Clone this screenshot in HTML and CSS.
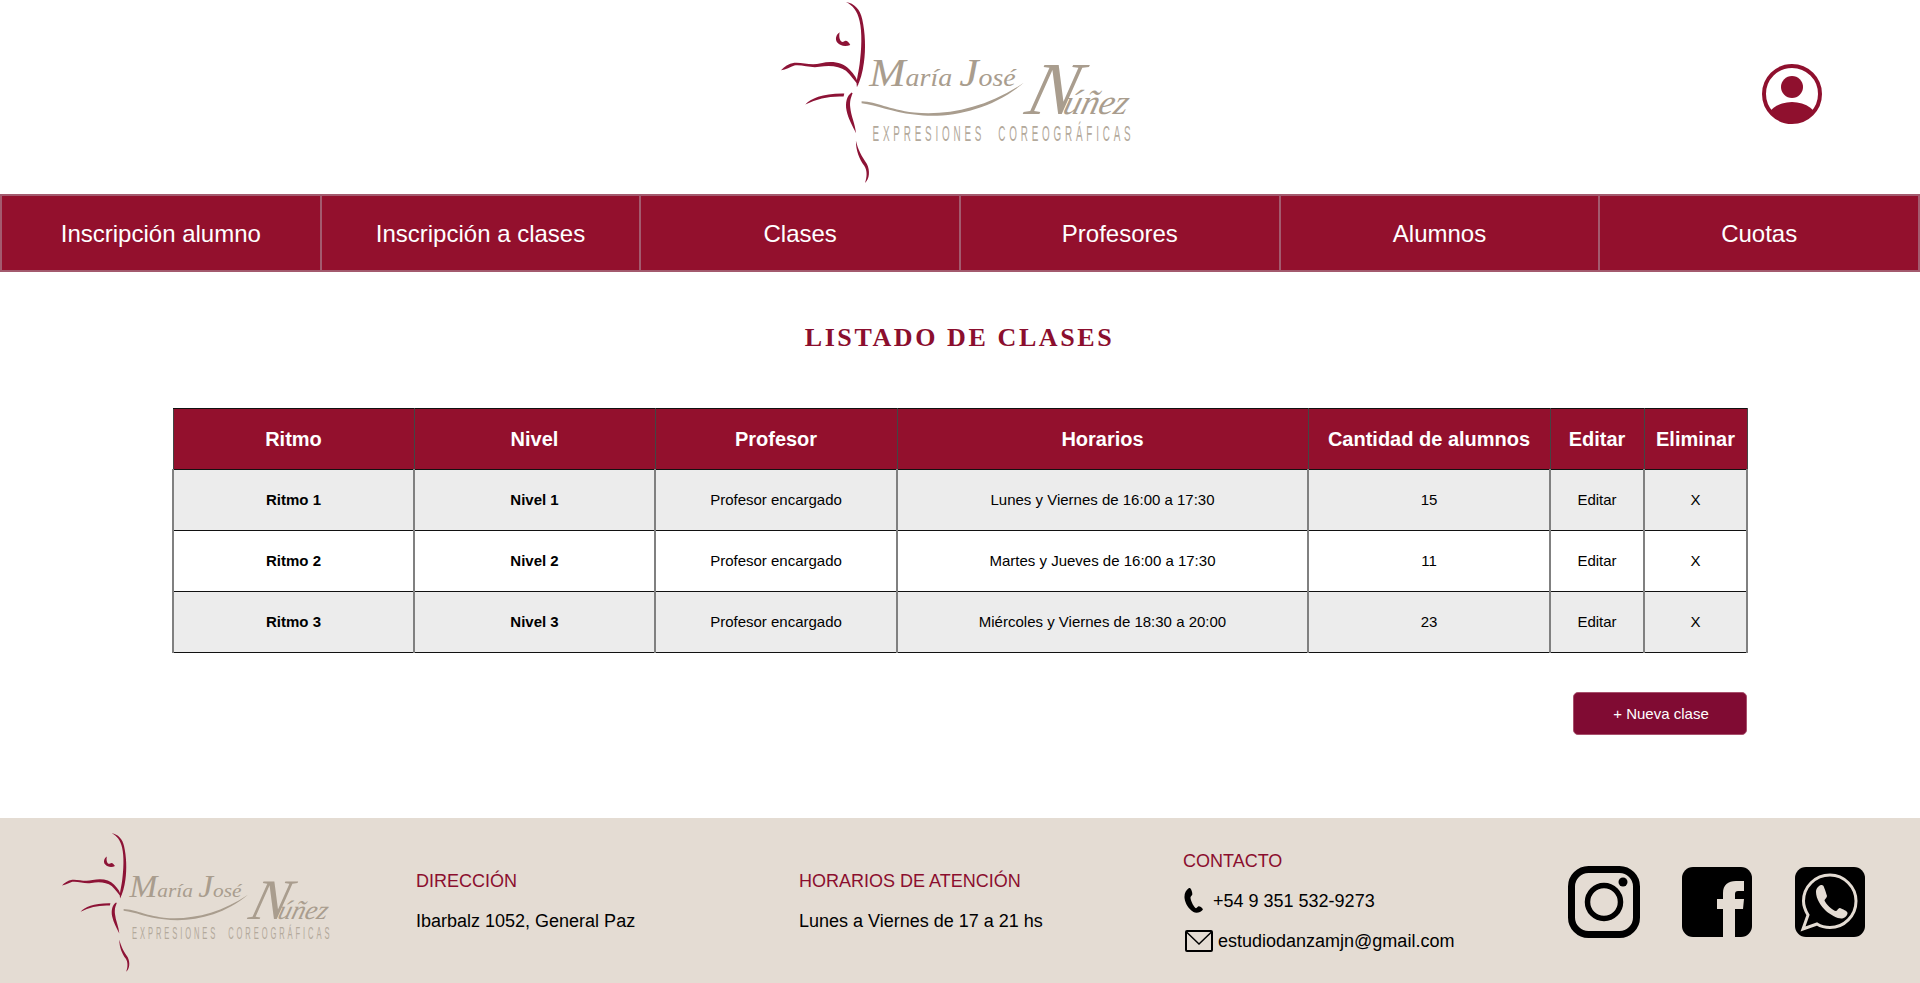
FILE: index.html
```html
<!DOCTYPE html>
<html lang="en">
<head>
    <meta charset="UTF-8">
    <meta name="viewport" content="width=device-width, initial-scale=1.0">
    <title>Listado de clases</title>
    <link rel="stylesheet" href="styles.css">
</head>
<body>
<svg class="defs" width="0" height="0">
    <symbol id="logo-art" viewBox="60 0 1060 560">
        <g class="logo-red">
            <path d="M255 8C280 12 298 30 304 60C313 100 315 150 309 190C305 220 298 245 288 264C285 245 292 225 296 195C302 150 304 100 296 65C290 35 275 18 255 8Z"/>
            <path d="M60 213C70 203 82 194 100 191C125 189 150 200 180 192C215 184 245 190 265 210C280 225 290 240 292 258C280 245 270 228 255 215C235 200 205 197 175 203C150 208 125 196 100 199C88 203 75 212 60 213Z"/>
            <path d="M236 99C226 105 221 120 229 130C238 141 255 143 268 137C263 127 255 121 249 127C241 132 232 120 236 99Z"/>
            <path d="M133 316C150 298 185 282 250 283L248 292C205 290 170 298 133 316Z"/>
            <path d="M272 280C258 290 252 310 257 335C262 360 275 380 285 402C283 375 270 350 268 325C266 305 270 295 275 282Z"/>
            <path d="M285 425C285 455 295 480 310 500C320 515 318 535 312 552C326 540 328 515 318 495C302 470 292 455 285 425Z"/>
        </g>
        <path class="logo-tan" d="M302 306C350 308 380 330 460 340C560 350 680 325 790 250C690 335 560 360 460 346C390 338 350 318 302 312Z"/>
    </symbol>
</svg>

<header class="top">
    <svg class="top-logo" viewBox="60 0 1060 560">
        <use href="#logo-art" x="60" y="0" width="1060" height="560"/>
        <text class="logo-name" x="325" y="260" textLength="440" lengthAdjust="spacingAndGlyphs"><tspan class="logo-initial">M</tspan>aría <tspan class="logo-initial">J</tspan>osé</text>
        <text class="logo-surname" transform="skewX(-15)" x="880" y="346"><tspan class="logo-cap">N</tspan><tspan dx="-34">úñez</tspan></text>
        <text class="logo-tag" transform="translate(335 425) scale(.45 1)" textLength="1722">EXPRESIONES  COREOGRÁFICAS</text>
    </svg>
    <a class="user" href="#" aria-label="Usuario">
        <svg viewBox="0 0 60 60" width="60" height="60">
            <defs><clipPath id="user-clip"><circle cx="30" cy="30" r="28"/></clipPath></defs>
            <circle class="user-ring" cx="30" cy="30" r="28"/>
            <circle class="user-fill" cx="30" cy="23" r="11"/>
            <ellipse class="user-fill" cx="30" cy="58" rx="26" ry="20" clip-path="url(#user-clip)"/>
        </svg>
    </a>
</header>

<nav class="menu">
    <a href="#">Inscripción alumno</a>
    <a href="#">Inscripción a clases</a>
    <a href="#">Clases</a>
    <a href="#">Profesores</a>
    <a href="#">Alumnos</a>
    <a href="#">Cuotas</a>
</nav>

<main class="content">
    <h1>LISTADO DE CLASES</h1>
    <table class="classes">
        <colgroup>
            <col class="col-base">
            <col class="col-base">
            <col class="col-wide">
            <col class="col-hours">
            <col class="col-wide">
            <col class="col-edit">
            <col class="col-delete">
        </colgroup>
        <thead>
        <tr>
            <th>Ritmo</th>
            <th>Nivel</th>
            <th>Profesor</th>
            <th>Horarios</th>
            <th>Cantidad de alumnos</th>
            <th>Editar</th>
            <th>Eliminar</th>
        </tr>
        </thead>
        <tbody>
        <tr>
            <td class="strong">Ritmo 1</td>
            <td class="strong">Nivel 1</td>
            <td>Profesor encargado</td>
            <td>Lunes y Viernes de 16:00 a 17:30</td>
            <td>15</td>
            <td>Editar</td>
            <td>X</td>
        </tr>
        <tr>
            <td class="strong">Ritmo 2</td>
            <td class="strong">Nivel 2</td>
            <td>Profesor encargado</td>
            <td>Martes y Jueves de 16:00 a 17:30</td>
            <td>11</td>
            <td>Editar</td>
            <td>X</td>
        </tr>
        <tr>
            <td class="strong">Ritmo 3</td>
            <td class="strong">Nivel 3</td>
            <td>Profesor encargado</td>
            <td>Miércoles y Viernes de 18:30 a 20:00</td>
            <td>23</td>
            <td>Editar</td>
            <td>X</td>
        </tr>
        </tbody>
    </table>
    <div class="actions">
        <button type="button" class="new-class">+ Nueva clase</button>
    </div>
</main>

<footer class="bottom">
    <svg class="bottom-logo" viewBox="60 0 1060 560">
        <use href="#logo-art" x="60" y="0" width="1060" height="560"/>
        <text class="logo-name" x="325" y="260" textLength="440" lengthAdjust="spacingAndGlyphs"><tspan class="logo-initial">M</tspan>aría <tspan class="logo-initial">J</tspan>osé</text>
        <text class="logo-surname" transform="skewX(-15)" x="880" y="346"><tspan class="logo-cap">N</tspan><tspan dx="-34">úñez</tspan></text>
        <text class="logo-tag" transform="translate(335 425) scale(.45 1)" textLength="1722">EXPRESIONES  COREOGRÁFICAS</text>
    </svg>
    <div class="info">
        <h2>DIRECCIÓN</h2>
        <p>Ibarbalz 1052, General Paz</p>
    </div>
    <div class="info info-hours">
        <h2>HORARIOS DE ATENCIÓN</h2>
        <p>Lunes a Viernes de 17 a 21 hs</p>
    </div>
    <div class="info contact">
        <h2>CONTACTO</h2>
        <p class="phone">
            <svg viewBox="0 0 19 25" width="19" height="25">
                <path d="M5 0C1.5 2.5 0 6 .6 10.500C1.300 15.500 4.500 21 9.500 24C11 25 14 25 16 24C18 23 19.300 21.800 18.800 21C18 19.500 15.500 18 14.500 18.300C13.500 18.800 13 20 12 20.200C10 19.500 7 13.500 6.500 10C6.300 8.500 8 7.800 8.300 6.500C8.500 5 7.500 1.500 6.500.5C6.100 0 5.500-.2 5 0Z"/>
            </svg>
            +54 9 351 532-9273
        </p>
        <p class="mail">
            <svg viewBox="0 0 28 22" width="28" height="22">
                <rect class="line" x="1" y="1" width="26" height="20" rx="1"/>
                <path class="line-thin" d="M1.500 2L14 14L26.500 2"/>
            </svg>
            estudiodanzamjn@gmail.com
        </p>
    </div>
    <div class="social">
        <svg viewBox="0 0 72 72" width="72" height="72">
            <rect class="ig" x="3.500" y="3.500" width="65" height="65" rx="17"/>
            <circle class="ig-lens" cx="36" cy="36" r="16.500"/>
            <circle cx="55" cy="16" r="4.500"/>
        </svg>
        <svg viewBox="0 0 70 70" width="70" height="70">
            <rect width="70" height="70" rx="11"/>
            <path class="cut" d="M41 70V42H35V32H41V26C41 18 46 14 54 14H62V24H56C54 24 53 25 53 27V32H62L61 42H53V70Z"/>
        </svg>
        <svg class="whatsapp" viewBox="0 0 70 70" width="70" height="70">
            <rect width="70" height="70" rx="11"/>
            <path class="wa-ring" d="M8 62L13 48C10 43 8.500 39 8.500 34C8.500 20 20 8 35 8C49 8 61 20 61 34C61 49 49 60.500 35 60.500C30 60.500 26 59.500 22 57Z"/>
            <path class="cut" d="M26 18C24 18.500 21 21 21 25C21 32 26 39 31 44C36 48 43 52 47 51.500C50 51 52.500 48.500 52.500 46C52.500 44 47.500 42 45 41C43.500 40.500 42.500 43.500 41 44C38 44 30.500 36.500 29.500 33.500C29.500 32 32 31 32 29C31.500 27 29.500 21 28.500 19C28 18 27 18 26 18Z"/>
        </svg>
    </div>
</footer>
</body>
</html>
```

FILE: styles.css
```css
html, body {
    height: 100%;
}

body {
    font-family: "Liberation Sans", Arial, sans-serif;
    margin: 0;
    padding: 0;
    display: flex;
    flex-direction: column;
    color: #000;
    background: #fff;
}

.defs {
    position: absolute;
}

/* logo */
.logo-red {
    fill: #8d1336;
}

.logo-tan {
    fill: #a99d8e;
}

.logo-name,
.logo-surname {
    fill: #a99d8e;
    font-family: "Liberation Serif", serif;
    font-style: italic;
}

.logo-name {
    font-size: 78px;
}

.logo-initial {
    font-size: 122px;
}

.logo-surname {
    font-size: 105px;
}

.logo-cap {
    font-size: 225px;
}

.logo-tag {
    font-family: "Liberation Sans", sans-serif;
    font-size: 66px;
    white-space: pre;
    fill: #b3a99b;
}

/* header */
.top {
    height: 194px;
    display: flex;
    align-items: flex-start;
    justify-content: center;
    position: relative;
}

.top-logo {
    width: 353px;
    height: 187px;
    margin-right: 5px;
    margin-top: -1px;
}

.user {
    position: absolute;
    left: 1762px;
    top: 64px;
    display: block;
    height: 60px;
}

.user-ring {
    fill: none;
    stroke: #8f102e;
    stroke-width: 4;
}

.user-fill {
    fill: #8f102e;
}

/* menu */
.menu {
    display: flex;
    height: 78px;
    box-sizing: border-box;
    padding: 2px 1px;
    background: #a35a6e;
}

.menu a {
    flex: 1;
    display: flex;
    align-items: center;
    justify-content: center;
    padding-top: 2px;
    background: #93102d;
    color: #fff;
    font-size: 24px;
    text-decoration: none;
    border-left: 1px solid #a35a6e;
    border-right: 1px solid #a35a6e;
}

/* listado */
.content {
    flex: 1;
    padding: 0 173px 0 172px;
}

h1 {
    font-family: "Liberation Serif", serif;
    font-size: 26px;
    line-height: 30px;
    letter-spacing: 2.6px;
    text-align: center;
    color: #8b0e2e;
    margin: 51px 0 55px;
}

.classes {
    width: 1574px;
    table-layout: fixed;
    border-collapse: collapse;
    text-align: center;
}

.col-base {
    width: 241px;
}

.col-wide {
    width: 242px;
}

.col-hours {
    width: 411px;
}

.col-edit {
    width: 94px;
}

.col-delete {
    width: 103px;
}

.classes th {
    height: 60px;
    padding: 0;
    background: #93102d;
    color: #fff;
    font-size: 20px;
    border: 1px solid #111;
    border-left-color: #444;
    border-right-color: #444;
}

.classes td {
    height: 58px;
    padding: 0 0 2px;
    font-size: 15px;
    border: 1px solid #111;
    border-left: 2px solid #808080;
    border-right: 2px solid #808080;
}

.classes tbody tr:nth-child(odd) td {
    background: #ececec;
}

.classes .strong {
    font-weight: bold;
}

.actions {
    display: flex;
    justify-content: flex-end;
    margin-top: 39px;
}

.new-class {
    width: 174px;
    height: 43px;
    padding: 0 0 0 2px;
    background: #800b33;
    color: #fff;
    border: 1px solid #a8506c;
    border-radius: 5px;
    font-family: inherit;
    font-size: 15px;
}

/* footer */
.bottom {
    height: 165px;
    display: flex;
    align-items: center;
    background: #e4dcd3;
    padding-left: 62px;
}

.bottom-logo {
    width: 270px;
    height: 143px;
    margin: 4px 84px 0 0;
}

.info {
    width: 383px;
    margin-top: 1px;
}

.info-hours {
    width: 384px;
}

.info h2 {
    font-size: 18px;
    font-weight: normal;
    line-height: 20px;
    color: #8b0e2e;
    margin: 0 0 20px;
}

.info p {
    font-size: 18px;
    line-height: 20px;
    margin: 0;
}

.contact {
    width: 385px;
    margin-top: 2px;
}

.info.contact h2 {
    margin-bottom: 17px;
}

.info .phone,
.info .mail {
    display: flex;
    align-items: center;
}

.info .phone {
    gap: 10px;
    margin-bottom: 17px;
}

.info .mail {
    gap: 5px;
}

.phone svg {
    flex: none;
    margin-left: 1px;
}

.mail svg {
    flex: none;
    margin-left: 2px;
}

.line {
    fill: none;
    stroke: #000;
    stroke-width: 2;
}

.line-thin {
    fill: none;
    stroke: #000;
    stroke-width: 1.500;
}

.social {
    display: flex;
    align-items: center;
    gap: 42px;
    margin-top: 3px;
}

.social svg {
    flex: none;
}

.social .whatsapp {
    margin-left: 1px;
}

.ig {
    fill: none;
    stroke: #000;
    stroke-width: 7;
}

.ig-lens {
    fill: none;
    stroke: #000;
    stroke-width: 5.500;
}

.cut {
    fill: #e4dcd3;
}

.wa-ring {
    fill: none;
    stroke: #e4dcd3;
    stroke-width: 3;
}
```
